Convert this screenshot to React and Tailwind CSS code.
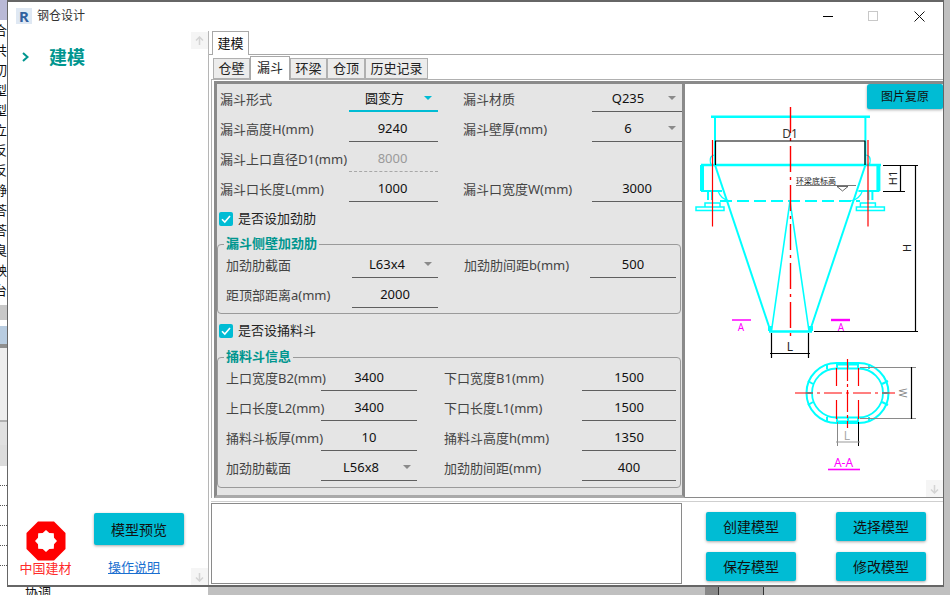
import React from "react";

const FONT = { fontFamily: '"Noto Sans", "Noto Sans CJK SC", sans-serif' };

function Arrow({ color = "#8a8a8a" }) {
  return <span className="absolute right-[6px] top-[12px] w-0 h-0 border-l-[4px] border-r-[4px] border-t-[4px] border-l-transparent border-r-transparent" style={{ borderTopColor: color }} />;
}

function Field({ label, value, labelW, inputW, arrow, kind, pad = 0 }) {
  const line = kind === "active" ? "border-b-2 border-[#00bcd4] text-[#111]" : kind === "disabled" ? "border-b border-dashed border-[#a8a8a8] text-[#9a9a9a]" : "border-b border-[#5f5f5f] text-[#111]";
  return (
    <div className="flex items-start h-[30px]">
      <div className="h-[30px] leading-[30px] whitespace-nowrap text-[#444]" style={{ width: labelW }}>{label}</div>
      <div className={`relative h-[28px] leading-[29px] text-center ${line}`} style={{ width: inputW, paddingRight: pad }}>
        {value}
        {arrow && <Arrow color={kind === "active" ? "#00bcd4" : "#8a8a8a"} />}
      </div>
    </div>
  );
}

function Check({ label }) {
  return (
    <div className="flex items-center h-[30px] gap-[5px] text-[#222]">
      <span className="w-[14px] h-[14px] rounded-[2px] bg-[#00bcd4] flex items-center justify-center">
        <svg width="10" height="10" viewBox="0 0 10 10"><path d="M1 5.2 L3.8 8 L9 2" fill="none" stroke="#fff" strokeWidth="1.6" /></svg>
      </span>
      <span>{label}</span>
    </div>
  );
}

function Group({ title, children, cls }) {
  return (
    <div className={`relative border border-[#9a9a9a] rounded-[4px] ${cls}`}>
      <div className="absolute left-[6px] top-[-10px] px-[2px] h-[16px] leading-[16px] bg-[#e5e5e5] text-[#00968f] font-bold whitespace-nowrap">{title}</div>
      {children}
    </div>
  );
}

function Btn({ children, cls = "w-[90px] h-[29px] text-[14px]" }) {
  return <button className={`${cls} bg-[#00bcd4] rounded-[2px] text-[#111] shadow-[0_1px_3px_rgba(0,0,0,0.35)]`}>{children}</button>;
}

function Scroll({ dir, cls }) {
  return (
    <div className={`absolute w-[17px] h-[17px] bg-[#f5f5f5] flex items-center justify-center ${cls}`}>
      <svg width="9" height="10" viewBox="0 0 9 10"><path d={dir === "up" ? "M4.5 9V1M1 4.5L4.5 1L8 4.5" : "M4.5 1V9M1 5.5L4.5 9L8 5.5"} fill="none" stroke="#d4d4d4" strokeWidth="1.5" /></svg>
    </div>
  );
}

function Drawing() {
  const c = "#00ffff", r = "#ff0000", m = "#ff00ff", k = "#000";
  const side = (
    <g stroke={c} fill="none">
      <path d="M715 117V165" strokeWidth="2" />
      <path d="M701 165V191M703 165V191M701 191H722M708 191V200M712 191V200" strokeWidth="2" />
      <path d="M705 203H720V207H705ZM696 207H724V210.5H696Z" strokeWidth="1.5" />
      <path d="M711 165C709 158 711 155 715 155" strokeWidth="1.2" />
      <path d="M718 191C720 197 724 200 730 201" strokeWidth="1.2" />
      <path d="M715 165L770.5 331" strokeWidth="2" />
    </g>
  );
  return (
    <svg width="256" height="414" viewBox="685 84 256 414" className="block" style={FONT}>
      <path d="M711 116.7H870" stroke={c} strokeWidth="2.4" />
      <path d="M701 165H881" stroke={c} strokeWidth="2.4" />
      <path d="M720 201H860" stroke={c} strokeWidth="2" strokeDasharray="12 5" />
      <g>{side}</g>
      <g transform="translate(1580.4 0) scale(-1 1)">{side}</g>
      <path d="M790 201L771.5 331M790 201L809 331" stroke={c} strokeWidth="1.6" fill="none" />
      <path d="M769 331.5H812" stroke={c} strokeWidth="2.4" />
      <path d="M768 326h4v5h-4zM809 326h4v5h-4z" fill={c} />
      <path d="M790.5 107V340" stroke={r} strokeWidth="1.4" strokeDasharray="26 5 3 5" fill="none" />
      <path d="M712.5 140V226.5M868 140V226.5" stroke={r} strokeWidth="1.2" fill="none" />
      <path d="M715 141H865.5M715.5 141V165M865 141V165" stroke={k} strokeWidth="1.2" fill="none" />
      <text x="790" y="138" fontSize="12" textAnchor="middle" fill="#333">D1</text>
      <path d="M883 165.5H918M883 191.5H905M900.5 165V191M915.5 165V332M814 331.5H918" stroke={k} strokeWidth="1.2" fill="none" />
      <text transform="translate(897 178) rotate(-90)" fontSize="11" textAnchor="middle" fill="#222">H1</text>
      <text transform="translate(911 248) rotate(-90)" fontSize="11" textAnchor="middle" fill="#222">H</text>
      <text x="796" y="184" fontSize="8" fill="#222">环梁底标高</text>
      <path d="M796 185.5H856" stroke="#555" strokeWidth="0.8" />
      <path d="M837 186.5H848L842.5 191Z" fill="none" stroke="#444" strokeWidth="0.8" />
      <path d="M732 320H751" stroke={m} strokeWidth="1.5" />
      <path d="M831 320H850" stroke={m} strokeWidth="2.4" />
      <text x="741" y="331" fontSize="10" textAnchor="middle" fill={m}>A</text>
      <text x="841" y="331" fontSize="10" textAnchor="middle" fill={m}>A</text>
      <path d="M771.5 333V358M808.5 333V358M770 353.5H810" stroke={k} strokeWidth="1.2" fill="none" />
      <text x="790" y="351" fontSize="12" textAnchor="middle" fill="#222">L</text>
      <rect x="806.5" y="363" width="82" height="60" rx="30" fill="none" stroke={c} strokeWidth="2" />
      <rect x="812" y="368.5" width="71" height="49" rx="24.5" fill="none" stroke={c} strokeWidth="1.8" />
      <path d="M837 363V368M848 363V368M858 363V368M869 364V369M827 364V369M837 418V423M848 418V423M858 418V423M869 417V422M827 417V422M806 393H812M883 393H889M808 381L813 384M888 381L882 384M808 405L813 402M888 405L882 402" stroke={c} strokeWidth="2" />
      <path d="M837 364H859M837 422H859" stroke={c} strokeWidth="3" />
      <path d="M795 393H895" stroke={r} strokeWidth="1.2" strokeDasharray="18 4 3 4" />
      <path d="M847.5 359V428" stroke={r} strokeWidth="1.2" strokeDasharray="22 3 3 3" />
      <path d="M836.5 368V386M836.5 400V419M858.5 368V386M858.5 400V419" stroke={r} strokeWidth="1.2" />
      <path d="M860 367.5H916M860 418.5H916" stroke="#8a8a8a" strokeWidth="1" />
      <path d="M911.5 367V419" stroke={k} strokeWidth="1.2" />
      <text transform="translate(899 393) rotate(90)" fontSize="10" textAnchor="middle" fill="#888">W</text>
      <path d="M837.5 422V446" stroke="#888" strokeWidth="1" />
      <path d="M858.5 422V446" stroke={k} strokeWidth="1" />
      <path d="M836 442H860" stroke="#999" strokeWidth="1" />
      <text x="847" y="440" fontSize="12" textAnchor="middle" fill="#aaa">L</text>
      <text x="843.5" y="467" fontSize="12" textAnchor="middle" fill={m}>A-A</text>
      <path d="M828 469.5H860" stroke={m} strokeWidth="1.6" />
    </svg>
  );
}

function Logo() {
  return (
    <svg width="40" height="40" viewBox="0 0 40 40" className="block">
      <path d="M12 0.5H28L39.5 12V28L28 39.5H12L0.5 28V12Z" fill="#ff0000" />
      <path d="M20 9L23.3 12L27.8 12.2L28 16.7L31 20L28 23.3L27.8 27.8L23.3 28L20 31L16.7 28L12.2 27.8L12 23.3L9 20L12 16.7L12.2 12.2L16.7 12Z" fill="#fff" />
    </svg>
  );
}

export default function App() {
  const tab = "h-[21px] leading-[19px] text-center border border-[#b0b0b0] bg-[#ececec] text-[#222]";
  return (
    <div className="relative w-[950px] h-[595px] overflow-hidden bg-[#c0c0c0] text-[13px]" style={FONT}>
      <div className="flex flex-col w-[7px] h-[587px] overflow-hidden bg-white text-[13px] text-[#111]">
        <div className="h-[20px] shrink-0 bg-[#b9b9d6]" />
        <div className="h-[285px] shrink-0 flex flex-col overflow-hidden">
          {["合", "共", "切", "型", "型", "立", "反", "反", "静", "荅", "荅", "臭", "殃", "台"].map((t, i) => (
            <div key={i} className="h-[20px] leading-[20px] shrink-0 ml-[-6px]">{t}</div>
          ))}
        </div>
        <div className="h-[15px] shrink-0 bg-[#c8c8c8]" />
        <div className="h-[6px] shrink-0 bg-white" />
        <div className="h-[18px] shrink-0 bg-[#b8cce0]" />
        <div className="h-[4px] shrink-0 bg-[#8f8f8f]" />
        <div className="h-[72px] shrink-0 bg-[#eeeeee]" />
        <div className="h-[2px] shrink-0 bg-[#b0b0b0]" />
        <div className="h-[23px] shrink-0 bg-[#e0e0e0]" />
        <div className="h-[21px] shrink-0 bg-[#dcdcdc]" />
        <div className="flex-1 flex flex-col pt-[19px] gap-[19px]">
          {[0, 1, 2, 3, 4].map((i) => <div key={i} className="h-px shrink-0 border-t border-dotted border-[#555]" />)}
        </div>
      </div>
      <div className="flex h-[8px] items-stretch">
        <div className="w-[208px] bg-white overflow-hidden pl-[25px] text-[13px] leading-[10px] text-[#111] whitespace-nowrap">协调</div>
        <div className="w-[497px]" />
        <div className="w-[13px] bg-[#888]" />
        <div className="w-[46px] bg-[#aaa] border-x border-[#333]" />
      </div>

      <div className="absolute left-[7px] top-0 w-[937px] h-[587px] bg-white border-t-2 border-x border-b-2 border-[#666] flex flex-col">
        <div className="h-[29px] pb-[1px] flex items-center shrink-0">
          <div className="ml-[8px] w-[16px] h-[16px] bg-[#dfe8f3] flex items-center justify-center text-[15px] font-bold leading-none text-[#2f5f9e]">R</div>
          <div className="ml-[5px] text-[12px] text-[#333]">钢仓设计</div>
          <div className="ml-auto flex items-center">
            <div className="w-[10px] h-px bg-black mr-[35px]" />
            <div className="w-[10px] h-[10px] border border-[#c8c8c8] mr-[36px]" />
            <svg width="11" height="11" viewBox="0 0 11 11" className="mr-[18px]"><path d="M0.5 0.5L10.5 10.5M10.5 0.5L0.5 10.5" stroke="#111" strokeWidth="1" /></svg>
          </div>
        </div>

        <div className="flex flex-1 min-h-0">
          <div className="relative w-[201px] shrink-0 flex flex-col border-r border-[#b5b5b5]">
            <div className="flex items-center h-[30px] mt-[11px] pl-[14px]">
              <svg width="7" height="10" viewBox="0 0 7 10"><path d="M1 1L5.5 5L1 9" fill="none" stroke="#00968f" strokeWidth="2" /></svg>
              <span className="ml-[20px] text-[18px] font-bold text-[#00968f]">建模</span>
            </div>
            <div className="mt-auto h-[72px] relative flex">
              <div className="w-[75px] flex flex-col items-center mr-[11px]">
                <div className="mt-[8px]"><Logo /></div>
                <div className="-mt-[3px] pt-[1px] text-[13px] leading-[18px] text-[#ff2b2b]">中国建材</div>
              </div>
              <div className="flex flex-col items-start w-[90px]">
                <Btn cls="w-[90px] h-[32px] text-[14px]">模型预览</Btn>
                <a className="mt-[13px] ml-[14px] text-[13px] leading-[18px] text-[#1a6fd0] underline">操作说明</a>
              </div>
            </div>
            <Scroll dir="up" cls="left-[183px] top-[1px]" />
            <Scroll dir="down" cls="left-[183px] bottom-[0px]" />
          </div>

          <div className="flex-1 min-w-0 flex flex-col pl-[2px]">
            <div className="h-[24px] flex items-end border-b border-[#a8a8a8] shrink-0 -ml-[2px] pl-[3px]">
              <div className="w-[37px] h-[24px] leading-[22px] text-center border-x border-t border-[#a8a8a8] bg-white text-[#111] -mb-px">建模</div>
            </div>
            <div className="h-[24px] flex items-end pl-[2px] shrink-0">
              <div className={`${tab} w-[37px]`}>仓壁</div>
              <div className="w-[40px] h-[24px] leading-[21px] text-center border-x border-t border-[#a8a8a8] bg-white text-[#222] -mb-px relative z-10">漏斗</div>
              <div className={`${tab} w-[37px]`}>环梁</div>
              <div className={`${tab} w-[38px]`}>仓顶</div>
              <div className={`${tab} w-[63px]`}>历史记录</div>
            </div>
            <div className="border-t border-l border-[#b0b0b0] pt-[1px] pl-[2px] flex h-[419px] shrink-0">
              <div className="w-[471px] shrink-0 h-full bg-[#e5e5e5] border-[3px] border-b-[#aaa] border-[#8a8a8a] pl-[3px] overflow-hidden">
                <div className="flex"><Field label="漏斗形式" value="圆变方" labelW={129} inputW={89} arrow kind="active" pad={18} /><div className="w-[26px]" /><Field label="漏斗材质" value="Q235" labelW={129} inputW={90} arrow pad={18} /></div>
                <div className="flex"><Field label="漏斗高度H(mm)" value="9240" labelW={129} inputW={89} pad={2} /><div className="w-[26px]" /><Field label="漏斗壁厚(mm)" value="6" labelW={129} inputW={90} arrow pad={18} /></div>
                <div className="flex"><Field label="漏斗上口直径D1(mm)" value="8000" labelW={129} inputW={89} kind="disabled" pad={2} /></div>
                <div className="flex"><Field label="漏斗口长度L(mm)" value="1000" labelW={129} inputW={89} pad={2} /><div className="w-[26px]" /><Field label="漏斗口宽度W(mm)" value="3000" labelW={129} inputW={90} /></div>
                <div className="-ml-[1px]"><Check label="是否设加劲肋" /></div>
                <Group title="漏斗侧壁加劲肋" cls="w-[464px] h-[70px] -ml-[3px] mt-[10px] pt-[5px] pl-[8px]">
                  <div className="flex"><Field label="加劲肋截面" value="L63x4" labelW={126} inputW={86} arrow pad={16} /><div className="w-[26px]" /><Field label="加劲肋间距b(mm)" value="500" labelW={126} inputW={86} /></div>
                  <Field label="距顶部距离a(mm)" value="2000" labelW={126} inputW={86} />
                </Group>
                <div className="-ml-[1px] mt-[2px]"><Check label="是否设捅料斗" /></div>
                <Group title="捅料斗信息" cls="w-[464px] h-[131px] -ml-[3px] mt-[11px] pt-[5px] pl-[8px]">
                  <div className="flex"><Field label="上口宽度B2(mm)" value="3400" labelW={95} inputW={96} /><div className="w-[27px]" /><Field label="下口宽度B1(mm)" value="1500" labelW={138} inputW={94} /></div>
                  <div className="flex"><Field label="上口长度L2(mm)" value="3400" labelW={95} inputW={96} /><div className="w-[27px]" /><Field label="下口长度L1(mm)" value="1500" labelW={138} inputW={94} /></div>
                  <div className="flex"><Field label="捅料斗板厚(mm)" value="10" labelW={95} inputW={96} /><div className="w-[27px]" /><Field label="捅料斗高度h(mm)" value="1350" labelW={138} inputW={94} /></div>
                  <div className="flex"><Field label="加劲肋截面" value="L56x8" labelW={95} inputW={96} arrow pad={16} /><div className="w-[27px]" /><Field label="加劲肋间距(mm)" value="400" labelW={138} inputW={94} /></div>
                </Group>
              </div>
              <div className="relative flex-1 min-w-0 border-t-[3px] border-b border-[#8a8a8a] bg-white overflow-hidden">
                <Drawing />
                <div className="absolute right-0 top-0"><Btn cls="w-[76px] h-[25px] text-[12px] rounded-tl-[3px]">图片复原</Btn></div>
                <Scroll dir="down" cls="right-0 bottom-0" />
              </div>
            </div>
            <div className="flex flex-1 min-h-0 border-t border-[#cfcfcf] mt-[3px] pt-[1px]">
              <div className="w-[471px] h-[81px] shrink-0 border border-[#8a8a8a] bg-white" />
              <div className="grid grid-cols-[90px_90px] grid-rows-[29px_29px] gap-x-[40px] gap-y-[11px] ml-[24px] mt-[9px]">
                <Btn>创建模型</Btn>
                <Btn>选择模型</Btn>
                <Btn>保存模型</Btn>
                <Btn>修改模型</Btn>
              </div>
            </div>
          </div>
        </div>
      </div>
    </div>
  );
}
